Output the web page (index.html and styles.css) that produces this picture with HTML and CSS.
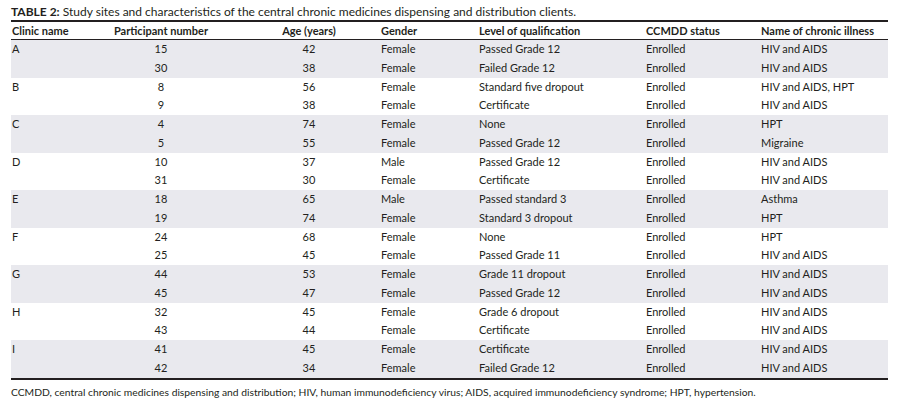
FILE: index.html
```html
<!DOCTYPE html>
<html>
<head>
<meta charset="utf-8">
<link rel="stylesheet" href="styles.css">
</head>
<body>
<div class="wrap">
  <div class="title"><b>TABLE 2:</b> Study sites and characteristics of the central chronic medicines dispensing and distribution clients.</div>
  <div class="table">
    <div class="row head">
      <div>Clinic name</div><div class="c2">Participant number</div><div class="c3">Age (years)</div><div>Gender</div><div>Level of qualification</div><div>CCMDD status</div><div>Name of chronic illness</div>
    </div>
    <div class="group shade">
      <div class="row"><div>A</div><div class="c2">15</div><div class="c3">42</div><div>Female</div><div>Passed Grade 12</div><div>Enrolled</div><div>HIV and AIDS</div></div>
      <div class="row"><div></div><div class="c2">30</div><div class="c3">38</div><div>Female</div><div>Failed Grade 12</div><div>Enrolled</div><div>HIV and AIDS</div></div>
    </div>
    <div class="group">
      <div class="row"><div>B</div><div class="c2">8</div><div class="c3">56</div><div>Female</div><div>Standard five dropout</div><div>Enrolled</div><div>HIV and AIDS, HPT</div></div>
      <div class="row"><div></div><div class="c2">9</div><div class="c3">38</div><div>Female</div><div>Certificate</div><div>Enrolled</div><div>HIV and AIDS</div></div>
    </div>
    <div class="group shade">
      <div class="row"><div>C</div><div class="c2">4</div><div class="c3">74</div><div>Female</div><div>None</div><div>Enrolled</div><div>HPT</div></div>
      <div class="row"><div></div><div class="c2">5</div><div class="c3">55</div><div>Female</div><div>Passed Grade 12</div><div>Enrolled</div><div>Migraine</div></div>
    </div>
    <div class="group">
      <div class="row"><div>D</div><div class="c2">10</div><div class="c3">37</div><div>Male</div><div>Passed Grade 12</div><div>Enrolled</div><div>HIV and AIDS</div></div>
      <div class="row"><div></div><div class="c2">31</div><div class="c3">30</div><div>Female</div><div>Certificate</div><div>Enrolled</div><div>HIV and AIDS</div></div>
    </div>
    <div class="group shade">
      <div class="row"><div>E</div><div class="c2">18</div><div class="c3">65</div><div>Male</div><div>Passed standard 3</div><div>Enrolled</div><div>Asthma</div></div>
      <div class="row"><div></div><div class="c2">19</div><div class="c3">74</div><div>Female</div><div>Standard 3 dropout</div><div>Enrolled</div><div>HPT</div></div>
    </div>
    <div class="group">
      <div class="row"><div>F</div><div class="c2">24</div><div class="c3">68</div><div>Female</div><div>None</div><div>Enrolled</div><div>HPT</div></div>
      <div class="row"><div></div><div class="c2">25</div><div class="c3">45</div><div>Female</div><div>Passed Grade 11</div><div>Enrolled</div><div>HIV and AIDS</div></div>
    </div>
    <div class="group shade">
      <div class="row"><div>G</div><div class="c2">44</div><div class="c3">53</div><div>Female</div><div>Grade 11 dropout</div><div>Enrolled</div><div>HIV and AIDS</div></div>
      <div class="row"><div></div><div class="c2">45</div><div class="c3">47</div><div>Female</div><div>Passed Grade 12</div><div>Enrolled</div><div>HIV and AIDS</div></div>
    </div>
    <div class="group">
      <div class="row"><div>H</div><div class="c2">32</div><div class="c3">45</div><div>Female</div><div>Grade 6 dropout</div><div>Enrolled</div><div>HIV and AIDS</div></div>
      <div class="row"><div></div><div class="c2">43</div><div class="c3">44</div><div>Female</div><div>Certificate</div><div>Enrolled</div><div>HIV and AIDS</div></div>
    </div>
    <div class="group shade">
      <div class="row"><div>I</div><div class="c2">41</div><div class="c3">45</div><div>Female</div><div>Certificate</div><div>Enrolled</div><div>HIV and AIDS</div></div>
      <div class="row"><div></div><div class="c2">42</div><div class="c3">34</div><div>Female</div><div>Failed Grade 12</div><div>Enrolled</div><div>HIV and AIDS</div></div>
    </div>
  </div>
  <div class="note">CCMDD, central chronic medicines dispensing and distribution; HIV, human immunodeficiency virus; AIDS, acquired immunodeficiency syndrome; HPT, hypertension.</div>
</div>
</body>
</html>
```
FILE: styles.css
```css
html, body {
  margin: 0;
  padding: 0;
  background: #ffffff;
}
body {
  font-family: "Lato", "Open Sans", sans-serif;
  color: #231f20;
  font-size: 11px;
}
.wrap {
  width: 877px;
  padding: 4px 0 0 11px;
}
.title {
  height: 16px;
  line-height: 16px;
  font-size: 12px;
  white-space: nowrap;
}
.title b {
  font-weight: 700;
}
.table {
  border-top: 2px solid #231f20;
  border-bottom: 2px solid #231f20;
}
.row {
  display: grid;
  grid-template-columns: 101px 98px 170px 98px 167px 115px 128px;
  height: 18.75px;
  line-height: 18.75px;
  white-space: nowrap;
}
.row > div {
  padding-left: 1px;
}
.row > .c2 {
  text-align: center;
  padding-left: 0;
}
.row > .c3 {
  text-align: center;
  padding-left: 28px;
}
.row.head {
  height: 17px;
  line-height: 17px;
  font-weight: 700;
  border-bottom: 1px solid #231f20;
}
.group.shade {
  background: #e9e9ee;
}
.note {
  margin-top: 6px;
  font-size: 10.3px;
  line-height: 12px;
  white-space: nowrap;
}
```
